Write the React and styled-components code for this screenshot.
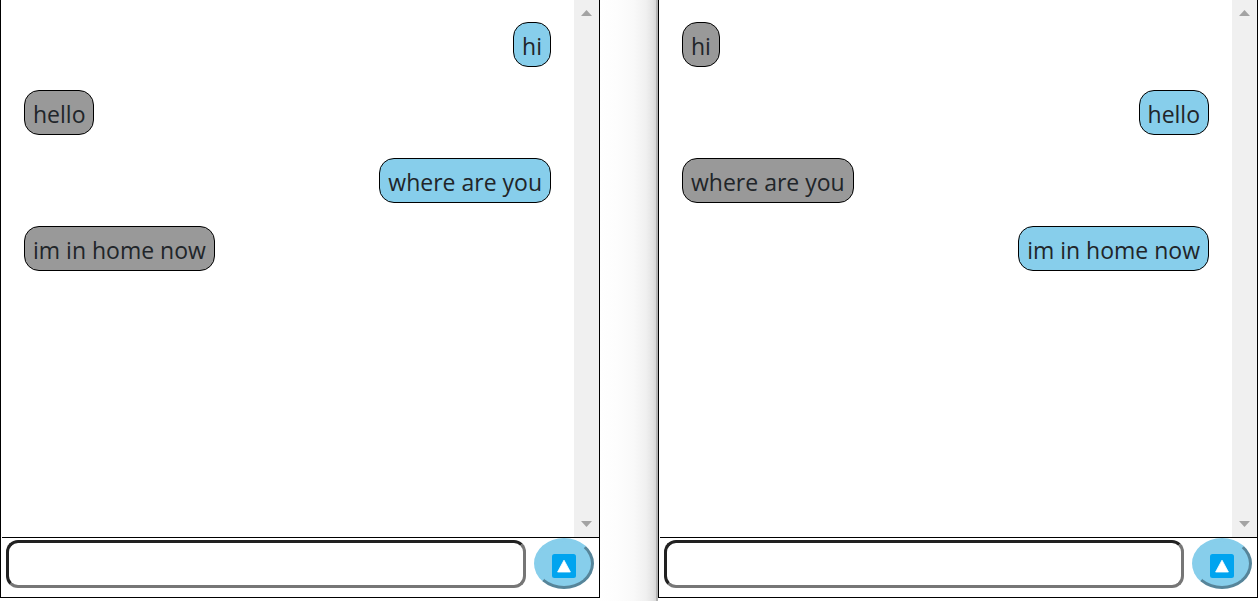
import React from "react";
import styled, { createGlobalStyle } from "styled-components";

const GlobalStyle = createGlobalStyle`
  *, *::before, *::after { box-sizing: border-box; }
  body {
    margin: 0;
    background: #fff;
    color: #212529;
    font-family: "Open Sans", "Noto Sans", sans-serif;
  }
`;

const Page = styled.main`
  display: grid;
  grid-template-columns: minmax(0, 1fr) 58px minmax(0, 1fr);
  height: 100vh;
  padding-right: 2px;
`;

const Gap = styled.div`
  border-right: 2px solid #b3b3b3;
  background: linear-gradient(to right, #fff 0%, #fdfdfd 30%, #f9f9f9 60%, #f0f0f0 82%, #e4e4e4 94%, #d8d8d8 100%);
`;

const ChatWindow = styled.section`
  display: flex;
  flex-direction: column;
  min-width: 0;
  margin-bottom: 3px;
  padding-left: 1px;
  border: 1px solid #000;
  border-top: 0;
`;

const History = styled.div`
  display: flex;
  flex: 1;
  min-height: 0;
`;

const Messages = styled.ul`
  display: flex;
  flex: 1;
  flex-direction: column;
  gap: 23px;
  margin: 0;
  padding: 22px 23px 22px 22px;
  overflow: hidden;
  list-style: none;
`;

const Bubble = styled.li`
  align-self: ${({ $mine }) => ($mine ? "flex-end" : "flex-start")};
  height: 45px;
  padding: 0 8px;
  border: 1px solid #000;
  border-radius: 15px;
  background: ${({ $mine }) => ($mine ? "#87ceeb" : "#999")};
  font-size: 23px;
  line-height: 46px;
  white-space: nowrap;
`;

const ScrollTrack = styled.div`
  display: flex;
  flex-direction: column;
  align-items: center;
  justify-content: space-between;
  width: 25px;
  padding: 10px 0;
  background: #f0f0f0;
`;

const Arrow = styled.svg`
  display: block;
  width: 11px;
  height: 6px;
  fill: #a3a3a3;
`;

const Composer = styled.form`
  display: flex;
  gap: 8px;
  height: 60px;
  padding: 0 5px 0 4px;
  border-top: 1px solid #000;
`;

const MessageInput = styled.input`
  flex: 1;
  min-width: 0;
  height: 48px;
  margin: 2px 0 0;
  padding: 0 8px;
  border: 3px solid;
  border-color: #212121 #767676 #767676 #212121;
  border-radius: 12px;
  background: #fff;
  color: inherit;
  font: inherit;
  font-size: 23px;
`;

const SendButton = styled.button`
  display: flex;
  align-items: center;
  justify-content: center;
  width: 60px;
  height: 51px;
  padding: 4px 0 0;
  border: 3px solid;
  border-color: #87ceeb #56859a #56859a #87ceeb;
  border-radius: 50%;
  background: #87ceeb;
  cursor: pointer;
`;

const SendIcon = styled.svg`
  display: block;
  width: 24px;
  height: 24px;
`;

const conversation = [
  { from: "a", text: "hi" },
  { from: "b", text: "hello" },
  { from: "a", text: "where are you" },
  { from: "b", text: "im in home now" },
];

function Chat({ user }) {
  return (
    <ChatWindow aria-label={`Chat ${user}`}>
      <History>
        <Messages>
          {conversation.map(({ from, text }) => (
            <Bubble key={text} $mine={from === user}>
              {text}
            </Bubble>
          ))}
        </Messages>
        <ScrollTrack aria-hidden="true">
          <Arrow viewBox="0 0 11 6">
            <path d="M5.5 0 11 6H0Z" />
          </Arrow>
          <Arrow viewBox="0 0 11 6">
            <path d="M0 0h11L5.5 6Z" />
          </Arrow>
        </ScrollTrack>
      </History>
      <Composer onSubmit={(event) => event.preventDefault()}>
        <MessageInput type="text" aria-label="Message" />
        <SendButton type="submit" aria-label="Send">
          <SendIcon viewBox="0 0 24 24" aria-hidden="true">
            <rect width="24" height="24" rx="2.5" fill="#00a4ef" />
            <path d="M12 6.2 18.4 18H5.6Z" fill="#fff" stroke="#fff" strokeWidth="0.8" strokeLinejoin="round" />
          </SendIcon>
        </SendButton>
      </Composer>
    </ChatWindow>
  );
}

export default function App() {
  return (
    <>
      <GlobalStyle />
      <Page>
        <Chat user="a" />
        <Gap />
        <Chat user="b" />
      </Page>
    </>
  );
}
